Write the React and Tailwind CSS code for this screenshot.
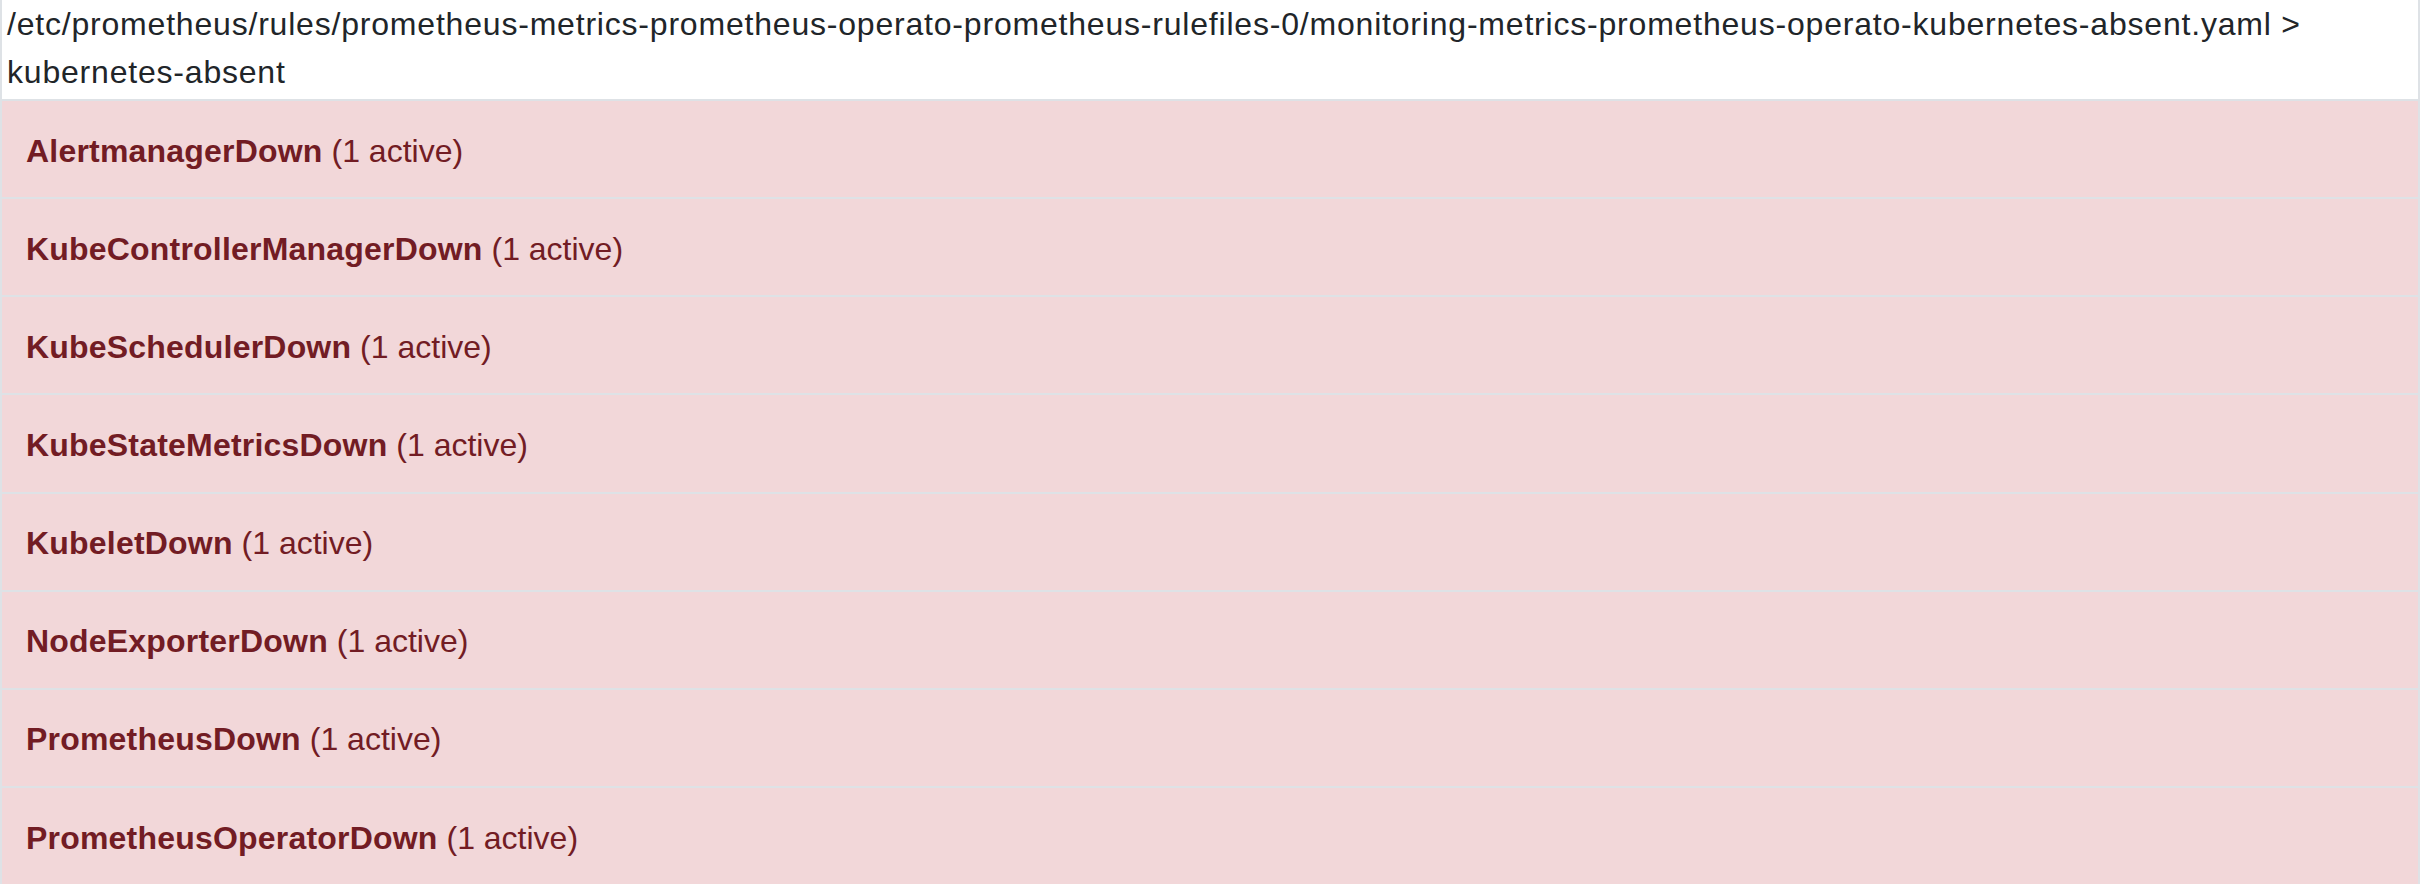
const rules = [
  "AlertmanagerDown",
  "KubeControllerManagerDown",
  "KubeSchedulerDown",
  "KubeStateMetricsDown",
  "KubeletDown",
  "NodeExporterDown",
  "PrometheusDown",
  "PrometheusOperatorDown",
];

export default function App() {
  return (
    <div className="w-[2420px] h-[884px] overflow-hidden bg-white font-['Liberation_Sans',Arial,sans-serif] text-[32px] leading-[48px]">
      <div className="border-x-2 border-[#dee2e6]">
        {/* group header */}
        <div className="px-[5px] pb-[3px] text-[#212529] bg-white tracking-[0.8px]">
          /etc/prometheus/rules/prometheus-metrics-prometheus-operato-prometheus-rulefiles-0/monitoring-metrics-prometheus-operato-kubernetes-absent.yaml &gt;{" "}
          <span className="whitespace-nowrap">kubernetes-absent</span>
        </div>
        {rules.map((name) => (
          <div
            key={name}
            className="border-t-2 border-[#dee2e6] bg-[#f2d7d9] px-6 pt-[25.5px] pb-[22.5px] leading-[48.15px] text-[#721c24]"
          >
            <span className="font-bold tracking-[0.2px]">{name}</span> (1 active)
          </div>
        ))}
      </div>
    </div>
  );
}
